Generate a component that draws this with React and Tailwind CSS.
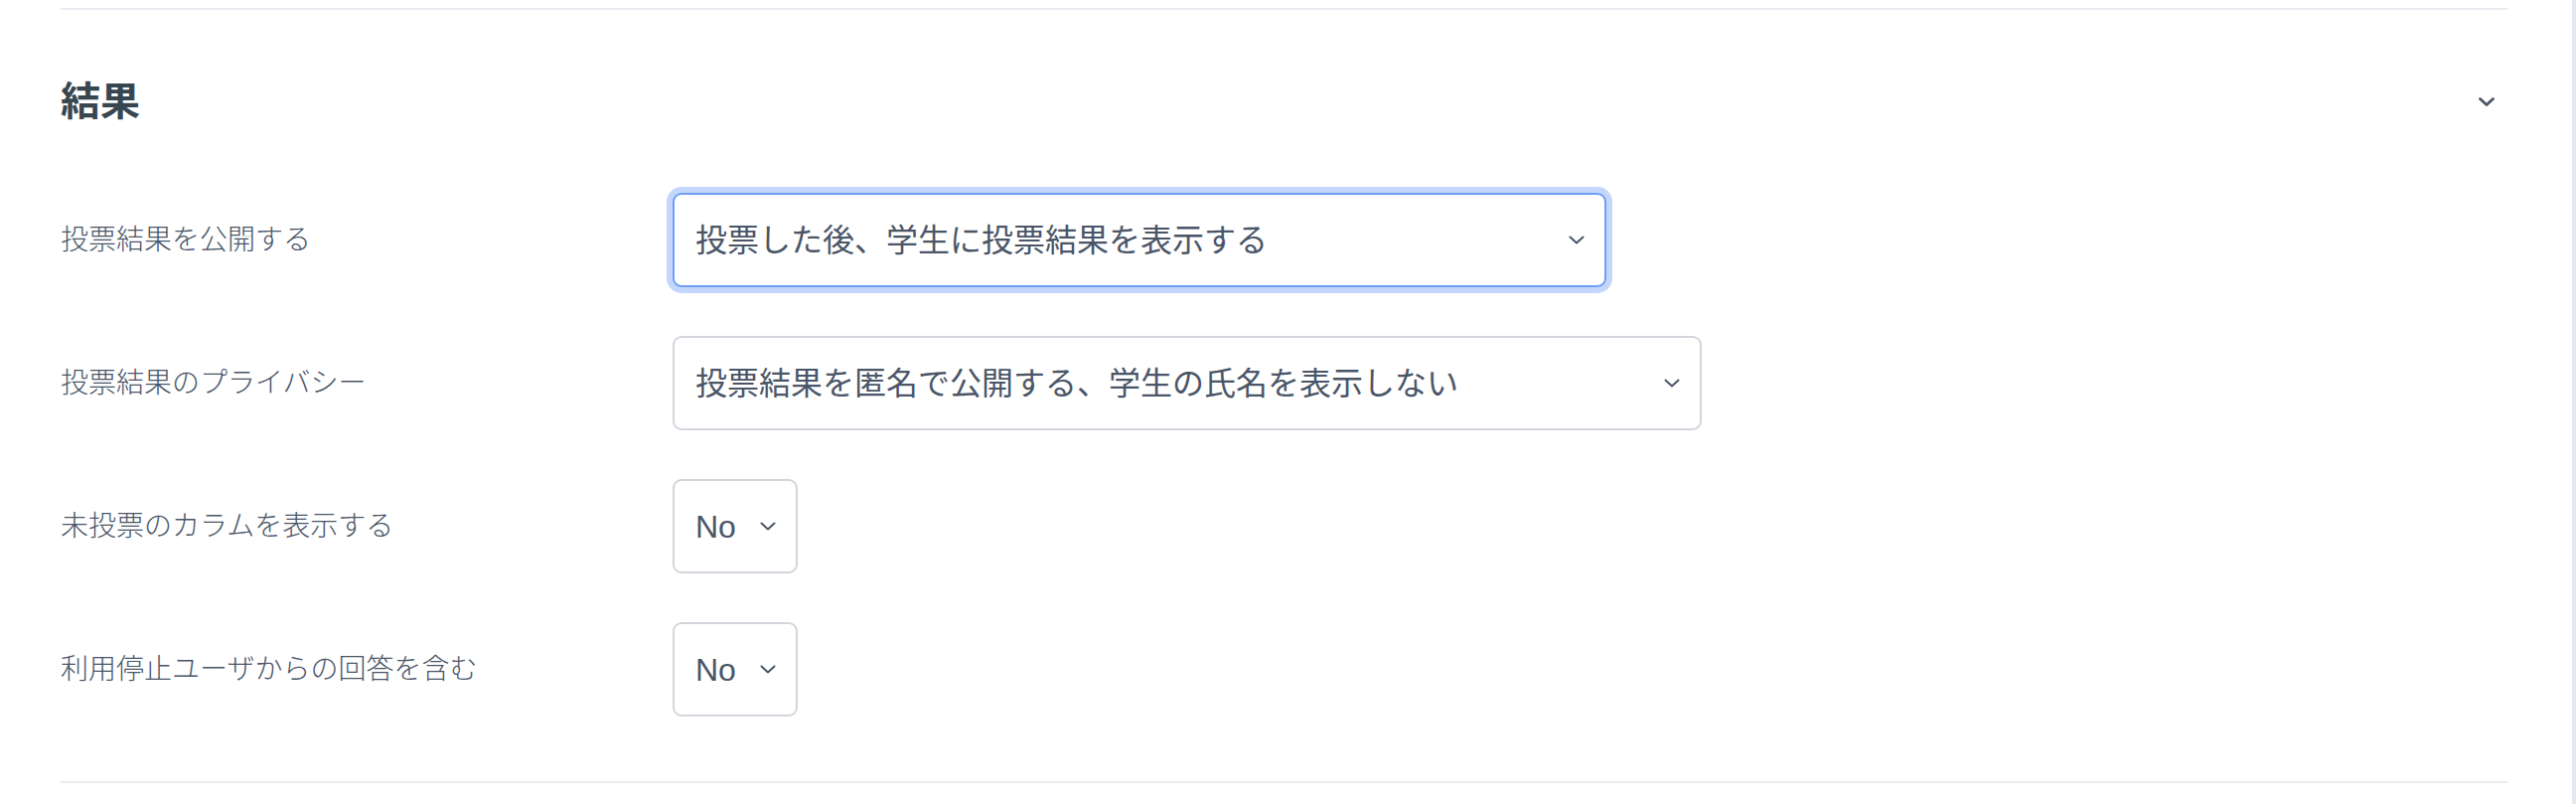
import React from "react";

const Chevron = ({ className, strokeWidth = 2.2 }) => (
  <svg viewBox="0 0 16 9" className={className} fill="none" stroke="currentColor" strokeWidth={strokeWidth} strokeLinecap="round" strokeLinejoin="round">
    <path d="M1.5 1.5 L8 7.5 L14.5 1.5" />
  </svg>
);

const Select = ({ value, width, focused }) => (
  <div
    className={
      "flex h-[95px] shrink-0 items-center justify-between rounded-[9px] border-2 bg-white pl-[21px] pr-[20px] text-[32px] text-[#4a5568] " +
      width +
      (focused ? " border-[#6f9ef6] shadow-[0_0_0_6px_#c4d7fb]" : " border-[#d2d6dc]")
    }
  >
    <span className="whitespace-nowrap leading-none">{value}</span>
    <Chevron className="h-[9px] w-[16px] shrink-0 text-[#4a5568]" strokeWidth={2} />
  </div>
);

const Row = ({ label, children }) => (
  <div className="flex items-center">
    <div className="w-[616px] shrink-0 text-[28px] font-light leading-none text-[#4a5568]">{label}</div>
    {children}
  </div>
);

export default function App() {
  return (
    <div className="flex h-[809px] w-full bg-white [font-family:'Liberation_Sans','Noto_Sans_CJK_JP',sans-serif]">
      <div className="flex-1 pl-[61px] pr-[64px] pt-[8px]">
        <div className="border-t-2 border-[#eaeef3]">
          <div className="flex items-center justify-between pt-[62px] pr-[14px]">
            <h2 className="text-[40px] font-bold leading-[60px] text-[#37464f]">結果</h2>
            <Chevron className="h-[9px] w-[16px] text-[#4a5568]" strokeWidth={2.8} />
          </div>
          <div className="mt-[62px] flex flex-col gap-[49px]">
            <Row label="投票結果を公開する">
              <Select value="投票した後、学生に投票結果を表示する" width="w-[940px]" focused />
            </Row>
            <Row label="投票結果のプライバシー">
              <Select value="投票結果を匿名で公開する、学生の氏名を表示しない" width="w-[1036px]" />
            </Row>
            <Row label="未投票のカラムを表示する">
              <Select value="No" width="w-[126px]" />
            </Row>
            <Row label="利用停止ユーザからの回答を含む">
              <Select value="No" width="w-[126px]" />
            </Row>
          </div>
          <div className="mt-[65px] border-t-2 border-[#eaeef3]" />
        </div>
      </div>
      <div className="w-[4px] shrink-0 bg-[#e4e8f1]" />
    </div>
  );
}
